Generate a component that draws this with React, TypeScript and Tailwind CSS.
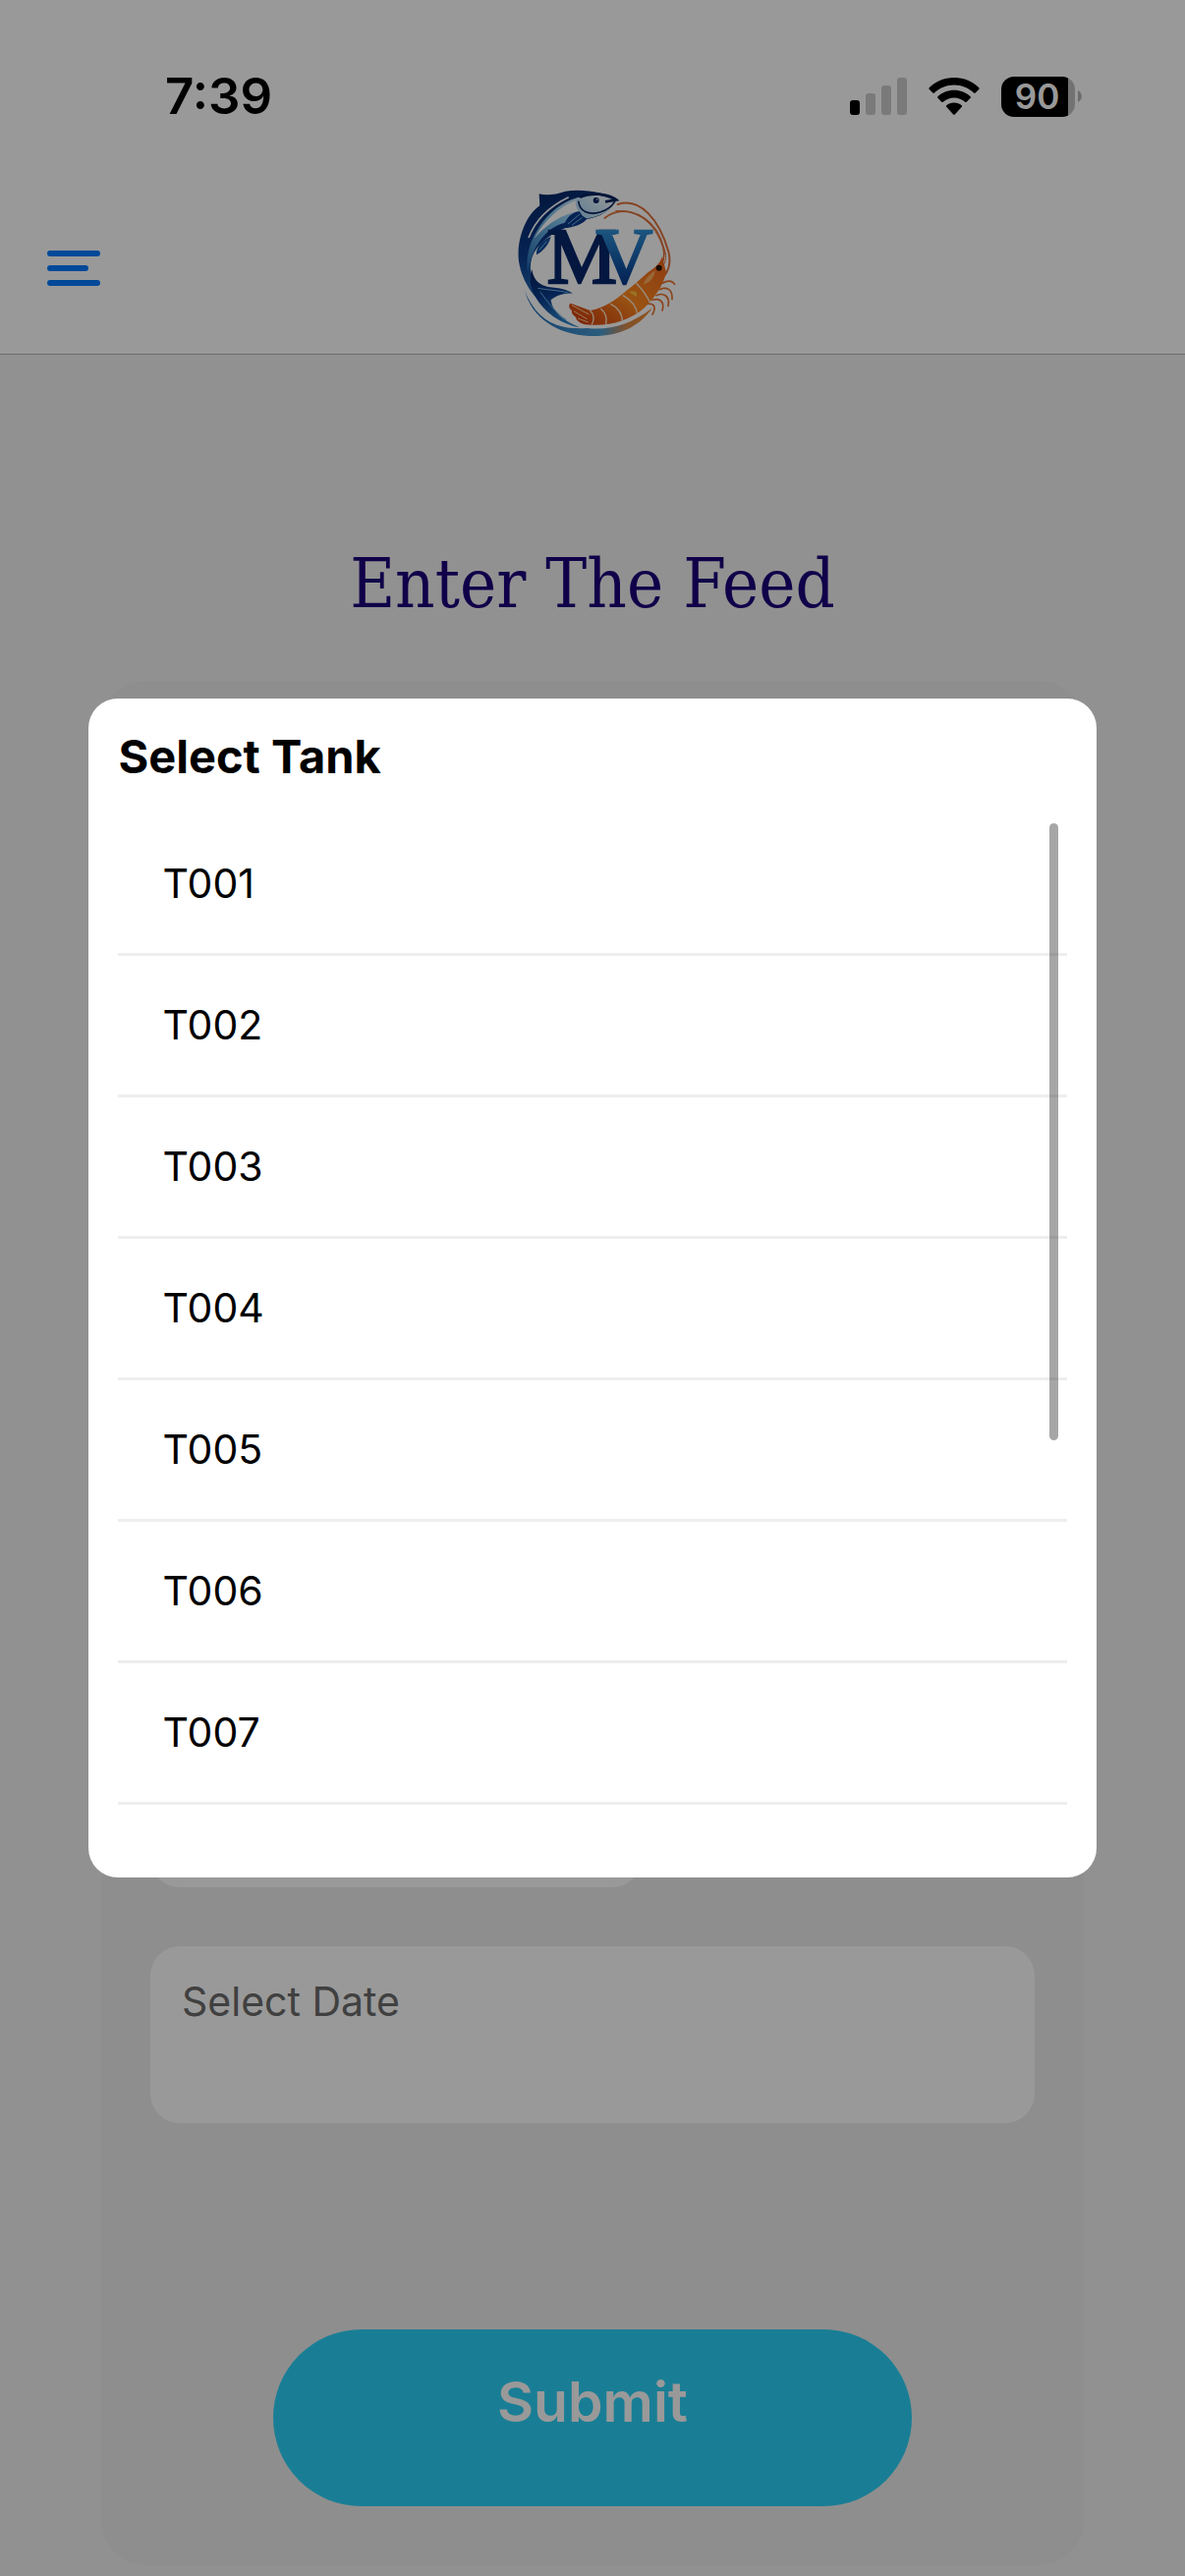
import { useState } from 'react';

const TANKS = ['T001', 'T002', 'T003', 'T004', 'T005', 'T006', 'T007'];

function SignalIcon() {
  return (
    <svg viewBox="0 0 58 38" className="w-[58px] h-[38px]">
      <rect x="0" y="23" width="10" height="15" rx="3" fill="#000" />
      <rect x="16" y="16" width="10" height="22" rx="3" fill="#000" opacity="0.2" />
      <rect x="32" y="8" width="10" height="30" rx="3" fill="#000" opacity="0.2" />
      <rect x="48" y="0" width="10" height="38" rx="3" fill="#000" opacity="0.2" />
    </svg>
  );
}

function WifiIcon() {
  return (
    <svg viewBox="0 0 52 38" className="w-[52px] h-[38px]">
      <path d="M26 0C36 0 45 4 51.3 10.2c.5.5.5 1.1.1 1.6l-3.7 3.7c-.5.5-1.1.5-1.6 0C40.8 10.4 33.8 7.4 26 7.4S11.2 10.4 5.9 15.5c-.5.5-1.1.5-1.6 0L.6 11.8c-.4-.5-.4-1.1.1-1.6C7 4 16 0 26 0Z" />
      <path d="M26 12.7c6.5 0 12.3 2.5 16.6 6.5.5.5.5 1.1 0 1.6l-3.9 3.9c-.5.5-1.1.4-1.6 0-3-2.7-6.8-4.3-11.1-4.3s-8.1 1.6-11.1 4.3c-.5.4-1.1.5-1.6 0l-3.9-3.9c-.5-.5-.5-1.1 0-1.6C13.7 15.2 19.5 12.7 26 12.7Z" />
      <path d="M26 25.5c2.9 0 5.6 1 7.7 2.7.5.4.5 1.1.1 1.6l-7 7.6c-.4.5-1.2.5-1.6 0l-7-7.6c-.4-.5-.4-1.2.1-1.6 2.1-1.7 4.8-2.7 7.7-2.7Z" />
    </svg>
  );
}

function Battery() {
  return (
    <div className="flex items-center gap-[3px]">
      <div className="flex h-[41px] w-[75px] items-center justify-center rounded-[13px] bg-[linear-gradient(90deg,#000_91%,rgba(0,0,0,0.25)_91%)] pr-[2px] text-[35px] leading-[41px] font-semibold text-white">
        90
      </div>
      <svg viewBox="0 0 4 12" className="h-[12px] w-[4px]">
        <path d="M0 0C5 2 5 10 0 12Z" opacity="0.3" />
      </svg>
    </div>
  );
}

function Logo() {
  return (
    <svg viewBox="-6 0 570 540" className="w-[190px] h-[180px]" role="img" aria-label="MV">
      <defs>
        <linearGradient id="fish" x1="0" y1="0" x2="0.3" y2="1">
          <stop offset="0" stopColor="#06245f" />
          <stop offset="0.5" stopColor="#0a3a8a" />
          <stop offset="1" stopColor="#2a80c6" />
        </linearGradient>
        <linearGradient id="belly" x1="1" y1="0" x2="0" y2="1">
          <stop offset="0" stopColor="#ffffff" />
          <stop offset="0.5" stopColor="#7ec3ee" />
          <stop offset="1" stopColor="#1d66ac" />
        </linearGradient>
        <linearGradient id="sweep" x1="0" y1="0" x2="1" y2="0">
          <stop offset="0" stopColor="#1e6cb8" />
          <stop offset="0.6" stopColor="#4a9bd0" />
          <stop offset="0.8" stopColor="#d98a4a" />
          <stop offset="1" stopColor="#f28a2a" />
        </linearGradient>
        <linearGradient id="shrimp" x1="0" y1="1" x2="1" y2="0">
          <stop offset="0" stopColor="#c8330c" />
          <stop offset="0.5" stopColor="#ff8a20" />
          <stop offset="1" stopColor="#ee641c" />
        </linearGradient>
        <linearGradient id="letterV" gradientUnits="userSpaceOnUse" x1="0" y1="160" x2="0" y2="326">
          <stop offset="0" stopColor="#2f8fd6" />
          <stop offset="1" stopColor="#063a8c" />
        </linearGradient>
      </defs>

      {/* lower water sweep */}
      <path d="M72 346C98 424 170 470 262 462C330 470 396 452 462 400C420 462 352 490 270 486C172 482 92 430 72 346Z" fill="url(#sweep)" />
      <path d="M96 392C130 436 178 458 238 460C186 466 126 444 96 392Z" fill="#fff" />

      {/* fish */}
      <path d="M116 52C138 58 168 54 196 44C252 36 320 48 350 68C338 104 300 124 254 130C224 150 180 158 150 180C112 206 86 240 90 284C96 330 126 366 164 412C108 386 64 324 54 258C46 196 74 118 118 88Z" fill="url(#fish)" />
      <path d="M240 62C196 70 142 108 112 160C84 204 74 250 82 296C88 234 116 186 158 156C190 136 224 134 250 128C300 124 334 104 348 74C316 54 276 52 240 62Z" fill="url(#belly)" />
      <path d="M228 72C176 92 130 134 100 190C130 152 172 124 214 110L236 104C228 94 226 82 228 72Z" fill="#fff" />
      <path d="M206 62C160 84 108 122 84 186" fill="none" stroke="#fff" strokeWidth="5" />
      <path d="M236 74C240 106 266 118 302 108C322 102 338 92 348 74" fill="none" stroke="#06245f" strokeWidth="5" />
      <path d="M240 62C276 46 330 52 352 70L318 76" fill="none" stroke="#06245f" strokeWidth="8" />
      <circle cx="290" cy="72" r="9" fill="#06245f" />
      <circle cx="293" cy="69" r="2" fill="#fff" />
      <path d="M240 106C218 106 196 126 190 156C222 156 252 142 262 128C250 122 244 116 240 106Z" fill="#0a3a8a" />
      <path d="M240 114L204 144M248 124L216 148" stroke="#6fb4e4" strokeWidth="3" />
      <path d="M152 182C124 194 106 214 108 238C130 226 146 206 152 182Z" fill="#0d4a9c" />
      <path d="M140 196L116 224" stroke="#6fb4e4" strokeWidth="3" />
      <path d="M94 282C100 324 128 336 162 338C186 340 204 346 220 356C190 354 166 364 152 376C156 404 174 432 240 460C170 446 122 404 96 350C88 326 88 302 94 282Z" fill="url(#fish)" />
      <path d="M112 340C142 346 176 346 206 354M120 352C140 380 164 412 200 438" fill="none" stroke="#6fb4e4" strokeWidth="3" />

      {/* letters */}
      <text x="140" y="325" fontFamily='"Liberation Serif", serif' fontSize="240">
        <tspan fill="#05276a" stroke="#05276a" strokeWidth="8">M</tspan>
        <tspan dx="-64" fill="url(#letterV)" stroke="url(#letterV)" strokeWidth="7">V</tspan>
      </text>

      {/* antennae */}
      <g fill="none" stroke="#e0713a" strokeLinecap="round">
        <path d="M356 84C424 62 484 130 512 232C518 262 512 284 500 300" strokeWidth="6" />
        <path d="M316 126C362 88 432 104 474 164C494 196 504 236 492 262" strokeWidth="5" />
        <path d="M350 104C420 96 480 150 500 236" strokeWidth="3" />
        <path d="M492 204C508 238 506 262 488 278" strokeWidth="3" />
      </g>

      {/* shrimp */}
      <path d="M492 244C484 266 470 278 448 292C424 314 402 334 382 348C350 376 312 402 272 408L212 386C204 392 208 402 216 408C214 418 222 424 228 428C230 442 248 452 274 452C330 456 392 440 438 400C470 368 496 330 504 292Z" fill="url(#shrimp)" />
      <path d="M412 324C432 344 450 372 454 384M372 362C396 376 414 396 416 420M334 388C356 398 370 418 370 440M304 402C318 414 324 432 320 450M272 408C284 420 286 438 276 452" fill="none" stroke="#ffe9cc" strokeWidth="4" />
      <path d="M390 352C408 344 420 352 412 366Z" fill="#ffc23a" />
      <path d="M470 286C452 298 440 312 434 328C452 326 468 308 470 286Z" fill="#ffb060" />
      <path d="M216 392L268 420M222 410L262 434M234 432L266 444" stroke="#ffcf9a" strokeWidth="3" />
      <circle cx="482" cy="278" r="9" fill="#2a1408" />
      <g fill="none" stroke="#e8702c" strokeWidth="5" strokeLinecap="round">
        <path d="M494 324C510 314 524 318 530 328" />
        <path d="M484 344C506 334 524 344 522 374" />
        <path d="M474 362C498 352 516 366 510 394" />
        <path d="M462 376C486 368 500 384 492 408" />
        <path d="M450 388C468 386 474 400 462 420" />
      </g>
    </svg>
  );
}

function Header() {
  return (
    <header className="border-b border-[#b8b8b8] bg-white">
      <div className="flex h-[180px] items-start justify-between pt-[68px] pr-[105px] pl-[168px]">
        <span className="text-[51px] leading-[60px] font-semibold">7:39</span>
        <div className="flex h-[60px] items-center gap-[22px]">
          <SignalIcon />
          <WifiIcon />
          <Battery />
        </div>
      </div>
      <div className="grid h-[180px] grid-cols-[1fr_auto_1fr] items-center px-12">
        <button aria-label="Open menu" className="justify-self-start">
          <svg viewBox="0 0 54 42" className="h-[42px] w-[54px]" stroke="#007bff" strokeWidth="6" strokeLinecap="round">
            <path d="M3 9H51M3 24H39M3 39H51" />
          </svg>
        </button>
        <Logo />
      </div>
    </header>
  );
}

export default function App() {
  const [tank, setTank] = useState('');

  return (
    <div className="flex min-h-screen flex-col bg-[#f2f2f2] font-[Inter,sans-serif] text-black">
      <Header />

      <main className="flex flex-1 flex-col items-center px-[103px] pt-[188px] pb-[11px]">
        <h1 className="font-['DejaVu_Serif_Condensed','DejaVu_Serif',serif] text-[70px] leading-[90px] text-[#1b007a]">
          Enter The Feed
        </h1>

        <form
          className="mt-[54px] flex w-full flex-1 flex-col justify-end rounded-[45px] bg-[#ededed] px-[50px] pb-[60px]"
          onSubmit={(e) => e.preventDefault()}
        >
          <input
            aria-label="Tank"
            readOnly
            value={tank}
            className="h-[150px] w-[500px] rounded-[30px] bg-white px-[32px] text-[41px]"
          />
          <input
            aria-label="Select Date"
            placeholder="Select Date"
            className="mt-[60px] h-[180px] w-full rounded-[30px] bg-white px-[32px] pt-[30px] pb-[98px] text-[41px] leading-[52px] placeholder:text-[#6b6b6b]"
          />
          <button
            type="submit"
            className="mt-[210px] h-[180px] w-[650px] self-center rounded-[90px] bg-[#2ad2f8] pb-[32px] text-[57px] font-semibold text-white"
          >
            Submit
          </button>
        </form>
      </main>

      {/* tank picker */}
      <div className="fixed inset-0 flex items-center justify-center bg-black/40">
        <div role="dialog" aria-modal="true" aria-labelledby="tank-title" className="flex h-[1200px] w-[85%] flex-col rounded-[30px] bg-white p-[30px]">
          <h2 id="tank-title" className="mb-[30px] text-[47px] leading-[58px] font-bold">Select Tank</h2>
          <div className="relative flex-1 overflow-hidden">
            <ul>
              {TANKS.map((name) => (
                <li key={name} className="border-b-3 border-[#eeeeee]">
                  <button
                    onClick={() => setTank(name)}
                    className="block w-full px-[45px] py-[45px] text-left text-[41px] leading-[51px]"
                  >
                    {name}
                  </button>
                </li>
              ))}
            </ul>
            <div className="absolute top-[9px] right-[9px] h-[628px] w-[9px] rounded-full bg-black/35" />
          </div>
        </div>
      </div>
    </div>
  );
}
